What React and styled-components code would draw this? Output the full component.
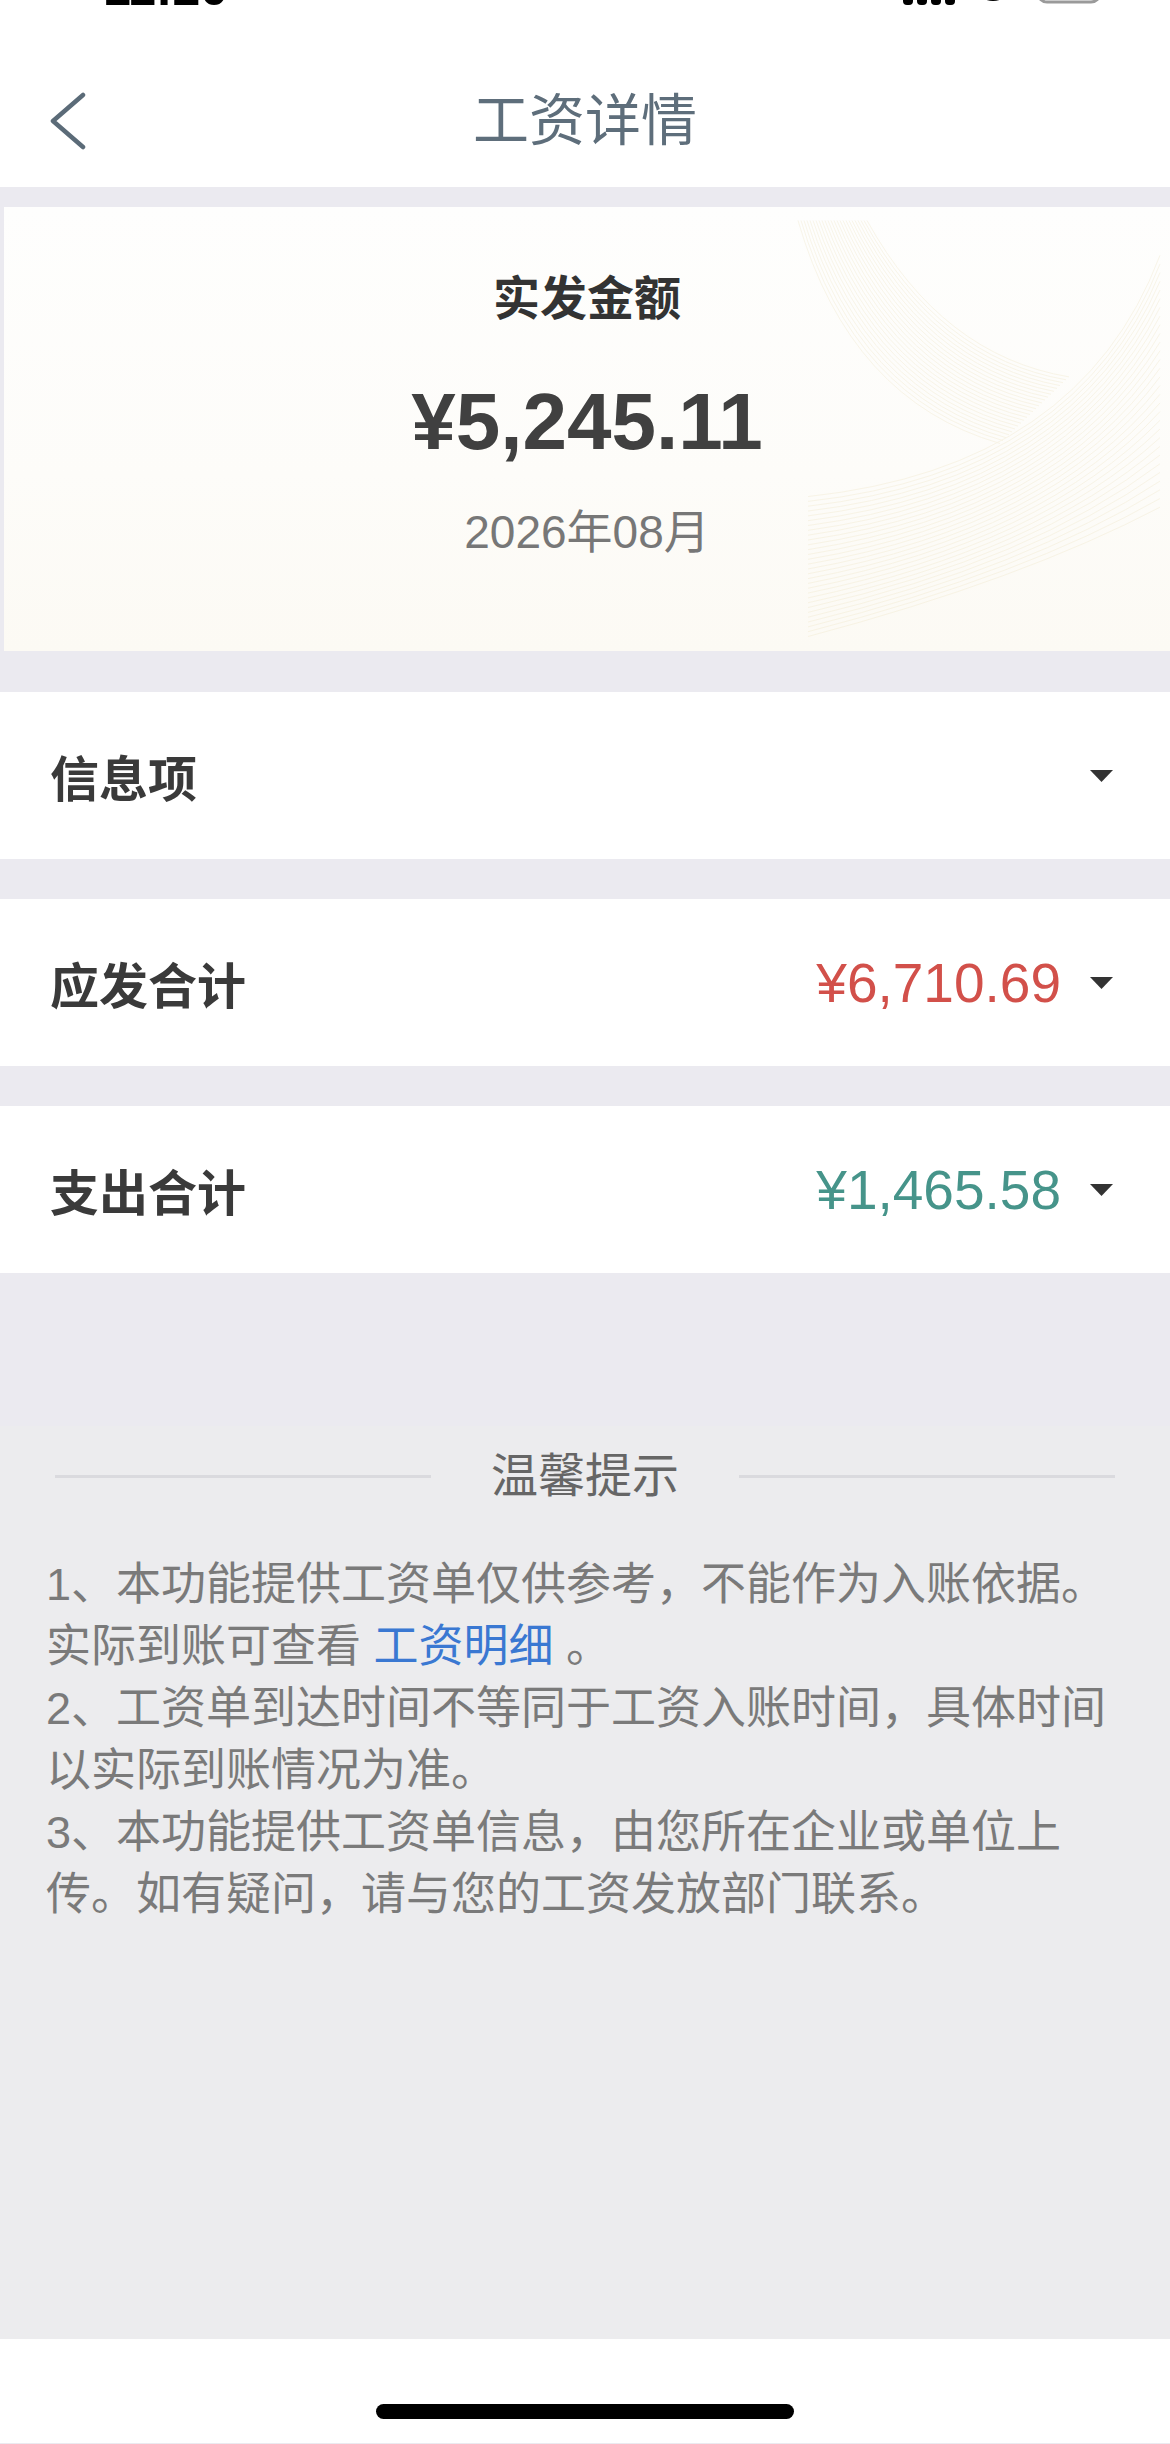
import React from 'react'
import styled, { createGlobalStyle } from 'styled-components'

const GlobalStyle = createGlobalStyle`
  html, body {
    margin: 0;
    padding: 0;
    background: #ffffff;
  }
  * {
    box-sizing: border-box;
  }
`

const CJK = `"Liberation Sans", "Noto Sans CJK SC", sans-serif`

const rows = [
  { label: '信息项' },
  { label: '应发合计', amount: '¥6,710.69', tone: 'red' },
  { label: '支出合计', amount: '¥1,465.58', tone: 'green' },
]

const Caret = () => (
  <CaretIcon width="23" height="12" viewBox="0 0 23 12">
    <polygon points="0,0 23,0 11.5,12" fill="#333333" />
  </CaretIcon>
)

// faint gold line fans in the corner of the amount card
const CardArt = () => {
  const upper = Array.from({ length: 24 }, (_, i) => (
    <path
      key={`u${i}`}
      d={`M ${798 + i * 3} 214 Q ${850 + i * 4} ${400 - i * 2} ${1000 + i * 3} ${445 - i * 3}`}
    />
  ))
  const lower = Array.from({ length: 30 }, (_, i) => (
    <path
      key={`l${i}`}
      d={`M 808 ${500 + i * 5} Q ${1080 - i * 2} ${470 + i * 4} 1160 ${250 + i * 9}`}
    />
  ))
  return (
    <Art viewBox="760 200 410 460" preserveAspectRatio="none">
      <g fill="none" stroke="#efe4c4" strokeWidth="1" opacity="0.35">
        {upper}
        {lower}
      </g>
    </Art>
  )
}

const App = () => {
  return (
    <>
      <GlobalStyle />
      <Page>
        <Header>
          <StatusBar>
            <Clock>11:20</Clock>
            <StatusIcons width="270" height="10" viewBox="0 0 270 10">
              <g fill="#000">
                <rect x="57" y="-20" width="10" height="25" rx="4" />
                <rect x="71" y="-20" width="10" height="25" rx="4" />
                <rect x="85" y="-20" width="10" height="25" rx="4" />
                <rect x="99" y="-20" width="10" height="25" rx="4" />
                <path d="M130 -6 Q147 8 164 -6 L160 -10 Q147 1 134 -10 Z" />
              </g>
              <rect x="192" y="-30" width="62" height="32" rx="9" fill="none" stroke="#9a9a9a" strokeWidth="3" />
            </StatusIcons>
          </StatusBar>
          <NavBar>
            <BackButton width="40" height="60" viewBox="0 0 40 60">
              <polyline points="33,3 3,29 33,55" fill="none" stroke="#5b6b78" strokeWidth="4.5" strokeLinecap="round" strokeLinejoin="round" />
            </BackButton>
            <NavTitle>工资详情</NavTitle>
            <span />
          </NavBar>
        </Header>

        <Card>
          <CardArt />
          <CardLabel>实发金额</CardLabel>
          <CardAmount>¥5,245.11</CardAmount>
          <CardDate>2026年08月</CardDate>
        </Card>

        <RowList>
          {rows.map((row) => (
            <Row key={row.label}>
              <RowLabel>{row.label}</RowLabel>
              <RowRight>
                {row.amount && <RowAmount tone={row.tone}>{row.amount}</RowAmount>}
                <Caret />
              </RowRight>
            </Row>
          ))}
        </RowList>

        <Spacer />

        <Tips>
          <TipsHeader>
            <Rule />
            <TipsTitle>温馨提示</TipsTitle>
            <Rule />
          </TipsHeader>
          <TipsBody>
            <TipLine>
              1、本功能提供工资单仅供参考，不能作为入账依据。实际到账可查看 <TipLink>工资明细</TipLink> 。
            </TipLine>
            <TipLine>2、工资单到达时间不等同于工资入账时间，具体时间以实际到账情况为准。</TipLine>
            <TipLine>3、本功能提供工资单信息，由您所在企业或单位上传。如有疑问，请与您的工资发放部门联系。</TipLine>
          </TipsBody>
        </Tips>

        <HomeArea>
          <HomeBar />
        </HomeArea>
      </Page>
    </>
  )
}

export default App

App.displayName = 'App'

const Page = styled.div`
  width: 1170px;
  min-height: 2444px;
  display: flex;
  flex-direction: column;
  background: #ebeaf0;
  font-family: ${CJK};
  overflow: hidden;
`

const Header = styled.div`
  background: #ffffff;
  display: flex;
  flex-direction: column;
`

const StatusBar = styled.div`
  height: 50px;
  overflow: hidden;
  display: flex;
  align-items: flex-start;
  justify-content: space-between;
  padding: 0 66px 0 103px;
`

const Clock = styled.div`
  font-family: "Liberation Sans", sans-serif;
  font-weight: 700;
  font-size: 50px;
  line-height: 50px;
  margin-top: -37px;
  color: #000;
`

const StatusIcons = styled.svg`
  display: block;
  margin-left: auto;
  margin-right: -12px;
`

const NavBar = styled.div`
  height: 137px;
  display: grid;
  grid-template-columns: 1fr auto 1fr;
  align-items: center;
  padding: 0 50px;
`

const BackButton = styled.svg`
  display: block;
  margin-top: 6px;
`

const NavTitle = styled.div`
  font-size: 56px;
  line-height: 70px;
  color: #5e6e7b;
  font-weight: 400;
  margin-top: 4px;
`

const Card = styled.div`
  position: relative;
  margin: 20px 0 0 4px;
  height: 444px;
  background: linear-gradient(180deg, #fefefd 0%, #fdfcf9 60%, #fcfaf4 100%);
  display: flex;
  flex-direction: column;
  align-items: center;
  overflow: hidden;
`

const Art = styled.svg`
  position: absolute;
  right: 0;
  top: 0;
  width: 410px;
  height: 444px;
  pointer-events: none;
`

const CardLabel = styled.div`
  position: relative;
  margin-top: 62px;
  font-size: 47px;
  line-height: 60px;
  font-weight: 700;
  color: #333333;
`

const CardAmount = styled.div`
  position: relative;
  margin-top: 43px;
  font-family: "Liberation Sans", sans-serif;
  font-size: 80px;
  line-height: 100px;
  font-weight: 700;
  color: #404040;
`

const CardDate = styled.div`
  position: relative;
  margin-top: 30px;
  font-size: 46px;
  line-height: 60px;
  color: #777777;
`

const RowList = styled.div`
  margin-top: 41px;
  display: flex;
  flex-direction: column;
  gap: 40px;
`

const Row = styled.div`
  height: 167px;
  background: #ffffff;
  display: flex;
  align-items: center;
  justify-content: space-between;
  padding: 0 57px 0 50px;
`

const RowLabel = styled.div`
  font-size: 49px;
  font-weight: 700;
  color: #3a3a3a;
`

const RowRight = styled.div`
  display: flex;
  align-items: center;
  gap: 29px;
`

const RowAmount = styled.div`
  font-family: "Liberation Sans", sans-serif;
  font-size: 55px;
  color: ${(p) => (p.tone === 'red' ? '#d2504a' : '#46948a')};
`

const CaretIcon = styled.svg`
  display: block;
`

const Spacer = styled.div`
  height: 153px;
`

const Tips = styled.div`
  height: 913px;
  background: #ececee;
  display: flex;
  flex-direction: column;
`

const TipsHeader = styled.div`
  height: 100px;
  display: flex;
  align-items: center;
  padding: 0 55px;
  gap: 60px;
`

const Rule = styled.div`
  flex: 1;
  height: 3px;
  background: #dadade;
`

const TipsTitle = styled.div`
  font-size: 47px;
  color: #666666;
  line-height: 60px;
`

const TipsBody = styled.div`
  padding: 28px 44px 0 46px;
`

const TipLine = styled.p`
  margin: 0;
  font-size: 45px;
  line-height: 62px;
  color: #7a7a7a;
`

const TipLink = styled.span`
  color: #3a78d2;
`

const HomeArea = styled.div`
  height: 104px;
  background: #ffffff;
  display: flex;
  justify-content: center;
  padding-top: 65px;
`

const HomeBar = styled.div`
  width: 418px;
  height: 15px;
  border-radius: 8px;
  background: #000000;
`
